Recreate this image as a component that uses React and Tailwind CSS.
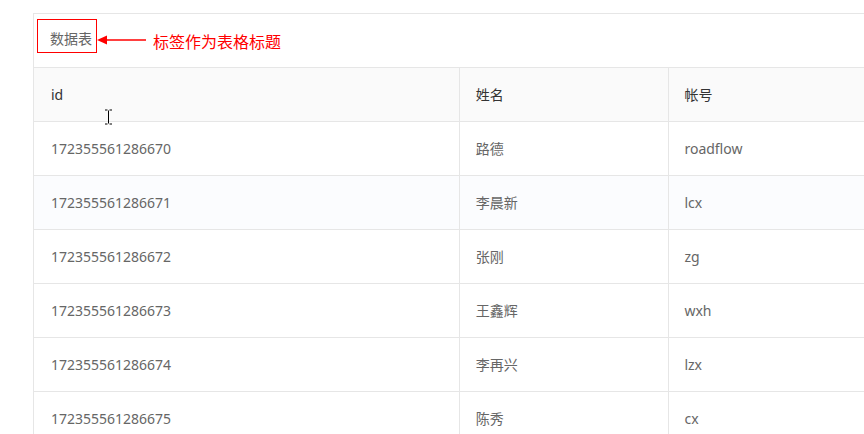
import React from 'react';

const rows = [
  { id: '172355561286670', name: '路德', account: 'roadflow' },
  { id: '172355561286671', name: '李晨新', account: 'lcx' },
  { id: '172355561286672', name: '张刚', account: 'zg' },
  { id: '172355561286673', name: '王鑫辉', account: 'wxh' },
  { id: '172355561286674', name: '李再兴', account: 'lzx' },
  { id: '172355561286675', name: '陈秀', account: 'cx' },
];

const font = { fontFamily: '"Noto Sans", "Noto Sans CJK SC", sans-serif' };

export default function App() {
  return (
    <div className="w-[864px] h-[434px] overflow-hidden bg-white relative" style={font}>
      <div className="pt-[13px] pl-[33px]">
        <div className="w-[900px] border-t border-l border-[#e6e6e6]">
          {/* caption */}
          <div className="h-[53px] flex items-start pl-[3px] pt-[5px]">
            <div className="w-[60px] h-[34px] border border-[#f00] flex items-center pl-[12px] pt-[4px] text-[14px] text-[#666]">
              数据表
            </div>
            <svg width="50" height="12" viewBox="0 0 50 12" className="mt-[15px]">
              <line x1="8" y1="6" x2="49" y2="6" stroke="#f00" strokeWidth="1.5" />
              <polygon points="0,6 10,1.5 10,10.5" fill="#f00" />
            </svg>
            <span className="ml-[6px] mt-[13px] text-[16px] leading-[20px] text-[#f00]">标签作为表格标题</span>
          </div>
          <table className="table-fixed border-collapse text-[14px]">
            <colgroup>
              <col className="w-[426px]" />
              <col className="w-[210px]" />
              <col className="w-[264px]" />
            </colgroup>
            <thead>
              <tr className="bg-[#fafafa] h-[54px]">
                <th className="border border-l-0 border-[#e6e6e6] text-left font-normal pl-[17px] text-[#333]">id</th>
                <th className="border border-[#e6e6e6] text-left font-normal pl-[16px] text-[#333]">姓名</th>
                <th className="border border-[#e6e6e6] text-left font-normal pl-[15px] text-[#333]">帐号</th>
              </tr>
            </thead>
            <tbody>
              {rows.map((r, i) => (
                <tr key={r.id} className={i === 1 ? 'h-[54px] bg-[#fbfcfe]' : 'h-[54px] bg-white'}>
                  <td className="border border-l-0 border-[#e6e6e6] pl-[17px] text-[#666]">{r.id}</td>
                  <td className="border border-[#e6e6e6] pl-[16px] text-[#666]">{r.name}</td>
                  <td className="border border-[#e6e6e6] pl-[15px] text-[#666]">{r.account}</td>
                </tr>
              ))}
            </tbody>
          </table>
        </div>
      </div>
      {/* text cursor */}
      <svg className="absolute left-[104px] top-[109px]" width="9" height="16" viewBox="0 0 9 16">
        <path d="M1 1h2.5M5.5 1H8M4.5 1.5v13M1 15h2.5M5.5 15H8" stroke="#000" strokeWidth="1" fill="none" />
      </svg>
    </div>
  );
}
